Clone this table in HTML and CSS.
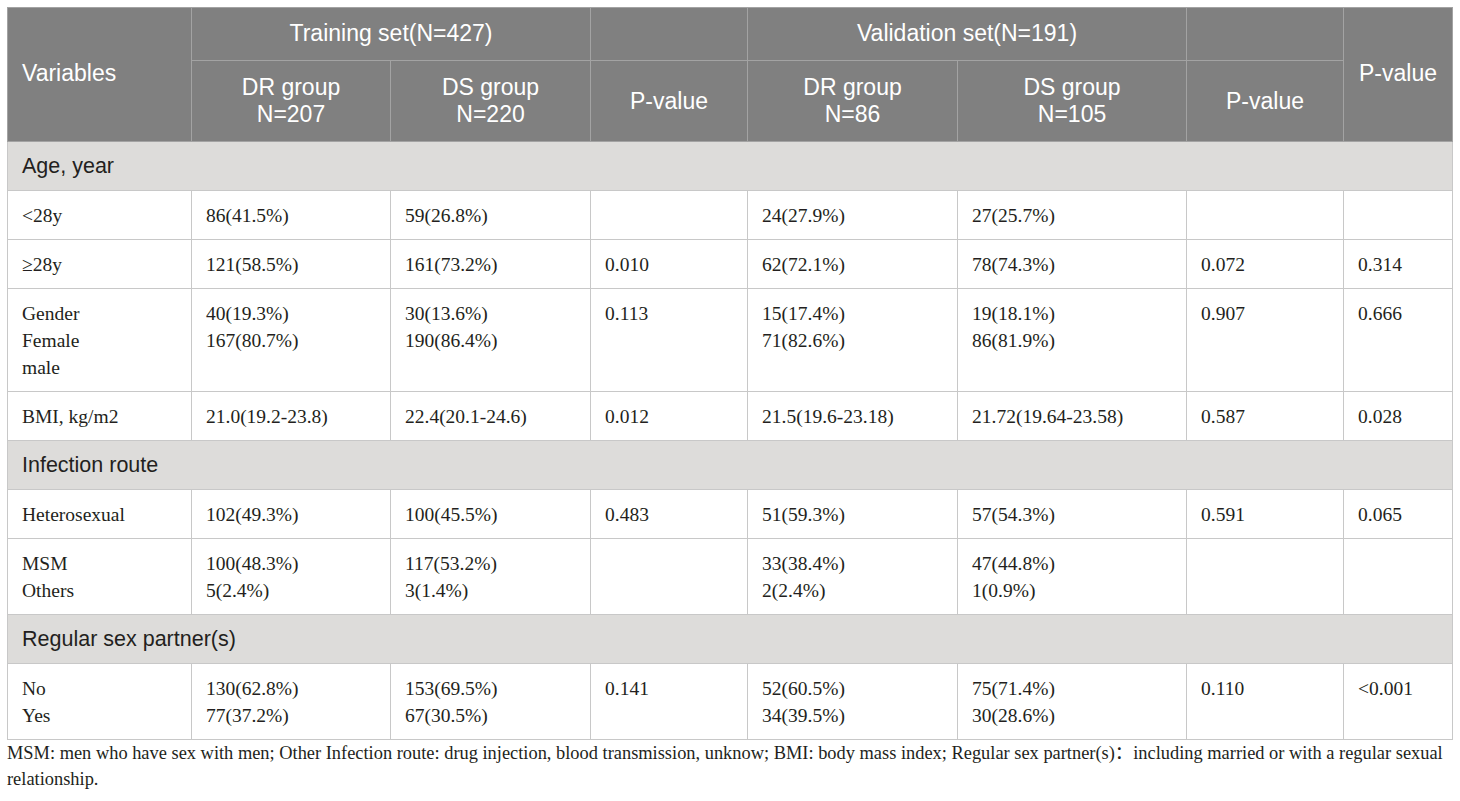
FILE: index.html
```html
<!DOCTYPE html>
<html lang="en">

<head>
  <meta charset="UTF-8">
  <title>Baseline characteristics</title>
  <link rel="stylesheet" href="styles.css">
</head>

<body>

  <table class="tabla">
    <colgroup>
      <col class="c-var">
      <col class="c-tr-dr">
      <col class="c-tr-ds">
      <col class="c-tr-p">
      <col class="c-va-dr">
      <col class="c-va-ds">
      <col class="c-va-p">
      <col class="c-p">
    </colgroup>
    <thead>
      <tr class="fila-1">
        <th rowspan="2" class="izq">Variables</th>
        <th colspan="2">Training set(N=427)</th>
        <th></th>
        <th colspan="2">Validation set(N=191)</th>
        <th></th>
        <th rowspan="2">P-value</th>
      </tr>
      <tr class="fila-2">
        <th>DR group<br>N=207</th>
        <th>DS group<br>N=220</th>
        <th>P-value</th>
        <th>DR group<br>N=86</th>
        <th>DS group<br>N=105</th>
        <th>P-value</th>
      </tr>
    </thead>
    <tbody>
      <tr class="seccion">
        <td colspan="8">Age, year</td>
      </tr>
      <tr>
        <td>&lt;28y</td>
        <td>86(41.5%)</td>
        <td>59(26.8%)</td>
        <td></td>
        <td>24(27.9%)</td>
        <td>27(25.7%)</td>
        <td></td>
        <td></td>
      </tr>
      <tr>
        <td>≥28y</td>
        <td>121(58.5%)</td>
        <td>161(73.2%)</td>
        <td>0.010</td>
        <td>62(72.1%)</td>
        <td>78(74.3%)</td>
        <td>0.072</td>
        <td>0.314</td>
      </tr>
      <tr>
        <td>Gender<br>Female<br>male</td>
        <td>40(19.3%)<br>167(80.7%)</td>
        <td>30(13.6%)<br>190(86.4%)</td>
        <td>0.113</td>
        <td>15(17.4%)<br>71(82.6%)</td>
        <td>19(18.1%)<br>86(81.9%)</td>
        <td>0.907</td>
        <td>0.666</td>
      </tr>
      <tr>
        <td>BMI, kg/m2</td>
        <td>21.0(19.2-23.8)</td>
        <td>22.4(20.1-24.6)</td>
        <td>0.012</td>
        <td>21.5(19.6-23.18)</td>
        <td>21.72(19.64-23.58)</td>
        <td>0.587</td>
        <td>0.028</td>
      </tr>
      <tr class="seccion">
        <td colspan="8">Infection route</td>
      </tr>
      <tr>
        <td>Heterosexual</td>
        <td>102(49.3%)</td>
        <td>100(45.5%)</td>
        <td>0.483</td>
        <td>51(59.3%)</td>
        <td>57(54.3%)</td>
        <td>0.591</td>
        <td>0.065</td>
      </tr>
      <tr>
        <td>MSM<br>Others</td>
        <td>100(48.3%)<br>5(2.4%)</td>
        <td>117(53.2%)<br>3(1.4%)</td>
        <td></td>
        <td>33(38.4%)<br>2(2.4%)</td>
        <td>47(44.8%)<br>1(0.9%)</td>
        <td></td>
        <td></td>
      </tr>
      <tr class="seccion">
        <td colspan="8">Regular sex partner(s)</td>
      </tr>
      <tr>
        <td>No<br>Yes</td>
        <td>130(62.8%)<br>77(37.2%)</td>
        <td>153(69.5%)<br>67(30.5%)</td>
        <td>0.141</td>
        <td>52(60.5%)<br>34(39.5%)</td>
        <td>75(71.4%)<br>30(28.6%)</td>
        <td>0.110</td>
        <td>&lt;0.001</td>
      </tr>
    </tbody>
  </table>

  <p class="nota">MSM: men who have sex with men; Other Infection route: drug injection, blood transmission, unknow; BMI: body mass index; Regular sex partner(s)：including married or with a regular sexual relationship.</p>

</body>

</html>
```

FILE: styles.css
```css
body {
  margin: 0;
  padding: 7px;
  background: white;
  color: #231f20;
  font-family: "Liberation Serif", "Noto Sans CJK SC", serif;
}

.tabla {
  width: 1445px;
  table-layout: fixed;
  border-collapse: collapse;
  border: 1px solid #c8c8c8;
}

.c-var { width: 184px; }
.c-tr-dr { width: 199px; }
.c-tr-ds { width: 200px; }
.c-tr-p { width: 157px; }
.c-va-dr { width: 210px; }
.c-va-ds { width: 229px; }
.c-va-p { width: 157px; }
.c-p { width: 109px; }

th {
  background: #808080;
  color: white;
  font-family: "Liberation Sans", sans-serif;
  font-weight: normal;
  font-size: 23px;
  line-height: 27px;
  text-align: center;
  border: 1px solid #a3a3a3;
  padding: 0 10px;
}

.fila-1 th {
  height: 50px;
  padding-bottom: 2px;
}

.fila-2 th {
  height: 80px;
}

th.izq {
  text-align: left;
  padding-left: 14px;
}

td {
  font-size: 19.5px;
  line-height: 27px;
  padding: 11px 14px 10px;
  vertical-align: top;
  text-align: left;
  border: 1px solid #c8c8c8;
}

.seccion td {
  background: #dddcda;
  font-family: "Liberation Sans", sans-serif;
  font-size: 21.5px;
  height: 27px;
}

.nota {
  margin: 0;
  font-size: 18.4px;
  line-height: 26px;
}
```
